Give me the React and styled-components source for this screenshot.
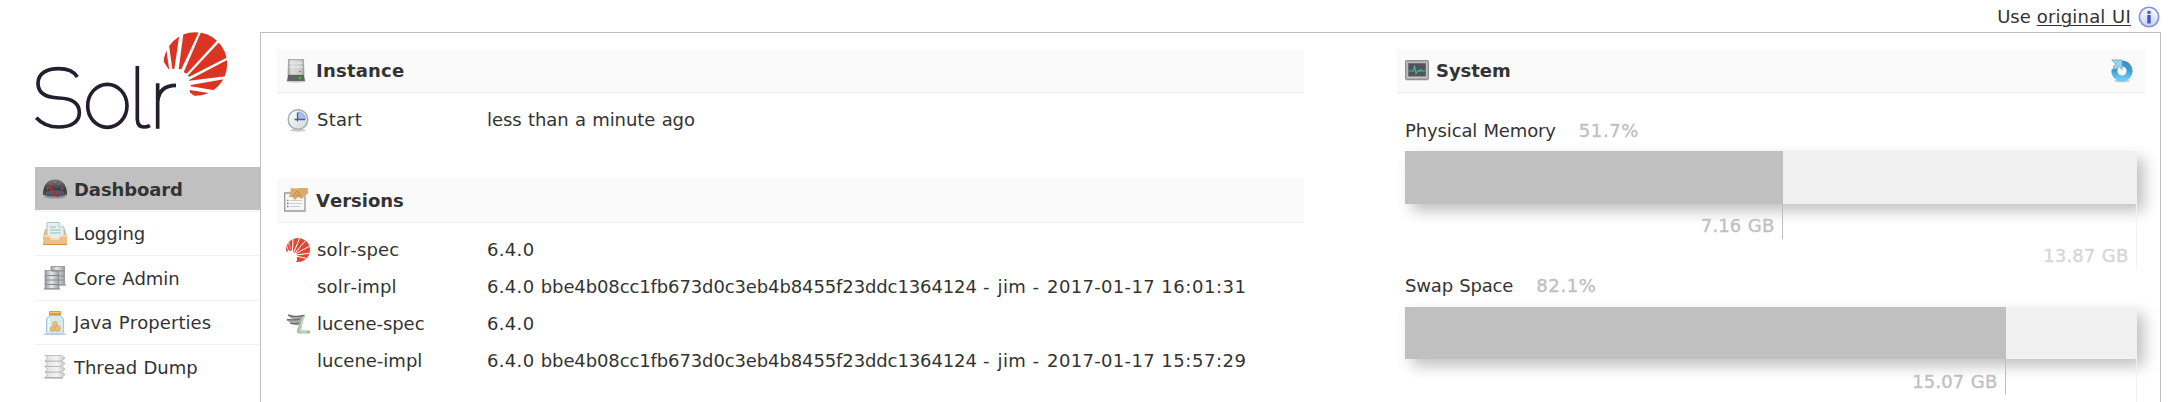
import React from "react";
import styled, { createGlobalStyle } from "styled-components";

const GlobalStyle = createGlobalStyle`
  * { box-sizing: border-box; }
  body {
    margin: 0;
    background: #fff;
    color: #333;
    font-family: Verdana, "DejaVu Sans", sans-serif;
    font-size: 18px;
    font-kerning: none;
    word-spacing: 0.034em;
    overflow: hidden;
  }
  svg { display: block; flex: none; }
`;

const Page = styled.div`
  display: flex;
  flex-direction: column;
  width: 2168px;
  height: 402px;
  overflow: hidden;
`;

const TopBar = styled.div`
  display: flex;
  align-items: center;
  justify-content: flex-end;
  height: 32px;
  padding: 1px 8px 0 0;
  flex: none;
`;

const OriginalLink = styled.a`
  color: #333;
  text-decoration: underline;
  text-decoration-thickness: 1px;
  text-underline-offset: 2px;
  margin: 0 7px 0 6px;
`;

const Main = styled.div`
  display: flex;
  flex: 1;
  min-height: 0;
  padding: 0 7px 0 35px;
`;

const Sidebar = styled.aside`
  width: 225px;
  flex: none;
`;

const LogoArea = styled.div`
  height: 135px;
`;

const Menu = styled.ul`
  list-style: none;
  margin: 0;
  padding: 0;
`;

const MenuItem = styled.li`
  display: flex;
  align-items: center;
  gap: 7px;
  height: 44.4px;
  padding: 0.6px 0 0 8px;
  border-top: 1px solid ${(p) => (p.$first ? "transparent" : "#f0f0f0")};
  background: ${(p) => (p.$active ? "#c0c0c0" : "transparent")};
  font-weight: ${(p) => (p.$active ? "bold" : "normal")};
`;

const ActiveItem = styled(MenuItem)`
  height: 43px;
  margin-bottom: 1px;
  padding-top: 2px;
  border-top: 0;
`;

const Label = styled.span`
  white-space: nowrap;
  letter-spacing: ${(p) => p.$track || 0}px;
`;

const Panel = styled.main`
  display: flex;
  justify-content: space-between;
  flex: 1;
  height: 400px;
  border: 1px solid #c0c0c0;
  padding: 16px 15px 0 16px;
`;

const LeftColumn = styled.div`
  width: 1027px;
`;

const RightColumn = styled.div`
  width: 748px;
`;

const Block = styled.section`
  margin-bottom: 40px;
`;

const BlockTitle = styled.h2`
  display: flex;
  align-items: center;
  height: ${(p) => p.$height || 44}px;
  margin: 0;
  padding: 0 12px 0 ${(p) => p.$indent || 7}px;
  background: #fafafa;
  border-bottom: 1px solid #f0f0f0;
  font-size: 18px;
  font-weight: bold;
`;

const TitleText = styled(Label)`
  flex: 1;
  margin-left: ${(p) => p.$gap || 8}px;
`;

const Rows = styled.dl`
  margin: 0;
  padding-top: 8px;
`;

const Row = styled.div`
  display: grid;
  grid-template-columns: 40px 170px 1fr;
  align-items: center;
  height: 37px;
`;

const RowIcon = styled.span`
  padding-left: 9px;
`;

const Term = styled.dt`
  white-space: nowrap;
  letter-spacing: ${(p) => p.$track || 0}px;
`;

const Value = styled.dd`
  margin: 0;
  white-space: nowrap;
  letter-spacing: ${(p) => p.$track || 0}px;
`;

const Gauges = styled.div`
  padding: 26px 8px 0;
`;

const GaugeHead = styled.div`
  display: flex;
  gap: 23px;
  height: 24px;
  line-height: 24px;
  margin: ${(p) => p.$margin};
`;

const Percent = styled(Label)`
  color: #c0c0c0;
  letter-spacing: 0.6px;
  -webkit-text-stroke: 0.35px #c0c0c0;
`;

const Track = styled.div`
  height: ${(p) => p.$height}px;
  background: #f0f0f0;
  box-shadow: 7px 7px 14px #c0c0c0;
`;

const Fill = styled.div`
  width: ${(p) => p.$width}px;
  height: 100%;
  background: #c0c0c0;
`;

const Scale = styled.div`
  border-right: 1px solid #f0f0f0;
  text-align: right;
  line-height: 26px;
  letter-spacing: 0.12px;
  -webkit-text-stroke: 0.35px;
`;

const UsedMark = styled.div`
  width: ${(p) => p.$width}px;
  height: ${(p) => p.$height}px;
  padding: ${(p) => p.$height - 26}px 7.6px 0 0;
  border-right: 1px solid #c0c0c0;
  color: #c0c0c0;
`;

const TotalMark = styled.div`
  height: 30px;
  padding: 4px 7.6px 0 0;
  color: #d6d6d6;
`;

function Logo() {
  return (
    <svg width="195" height="100" viewBox="105 96 585 300">
      <g fill="none" stroke="#241f2c" strokeWidth="11">
        <path d="M232 231C221 213 200 206 176 206C139 206 114 221 114 250C114 282 140 293 176 294C215 295 238 309 238 338C238 367 211 381 176 381C147 381 124 370 109 353" />
        <ellipse cx="322" cy="317.500" rx="59" ry="64.500" />
        <path d="M412 198V358Q413 381 432 381Q442 381 450 377" />
        <path d="M473 386V250M473 305Q477 256 528 256" />
      </g>
      <clipPath id="disc"><circle cx="586" cy="192" r="95.500" /></clipPath>
      <g fill="#da3523" clipPath="url(#disc)">
        <path d="M480 182L499 149L508 211L490 184Z" />
        <path d="M506 128L541 85L523 207H517Z" />
        <path d="M553 80L604 80L544 208H536Z" />
        <path d="M610 80L664 108L560 221L551 217Z" />
        <path d="M670 113L700 163L568 230L563 227Z" />
        <path d="M704 168V226L567 242V240Z" />
        <path d="M700 233L670 275L572 259V255Z" />
        <path d="M569 270L640 281L596 300L570 277Z" />
      </g>
    </svg>
  );
}

const InfoIcon = () => (
  <svg width="22" height="22" viewBox="0 0 22 22">
    <defs><linearGradient id="info" x2="0" y2="1"><stop stopColor="#fff" /><stop offset="1" stopColor="#ccd2e8" /></linearGradient></defs>
    <circle cx="11" cy="11" r="9.700" fill="url(#info)" stroke="#7f92ea" strokeWidth="1.600" />
    <circle cx="11" cy="6.300" r="1.900" fill="#4868dc" />
    <path d="M11 9V17.500" stroke="#3656d0" strokeWidth="3.400" />
  </svg>
);

const GaugeIcon = () => (
  <svg width="24" height="24" viewBox="0 0 24 24">
    <defs><linearGradient id="dash" x2="0" y2="1"><stop stopColor="#777" /><stop offset=".6" stopColor="#3d3d40" /><stop offset="1" stopColor="#55565f" /></linearGradient></defs>
    <ellipse cx="12" cy="18.500" rx="11" ry="2" fill="#777" opacity=".6" />
    <path d="M0 14C1 5 6 1.500 12 1.500S23 5 24 14V17Q12 20 0 17Z" fill="url(#dash)" />
    <path d="M3 14C7 11.500 17 11.500 21 14V16.500H3Z" fill="#555869" />
    <path d="M4 11L5.500 10.500M7 5.500L8 6.500M12 3.500V5M17 5.500L16 6.500M20 11L18.500 10.500" stroke="#999" />
    <path d="M5 7L15 19" stroke="#d02424" strokeWidth="1.600" />
  </svg>
);

const InboxIcon = () => (
  <svg width="24" height="24" viewBox="0 0 24 24">
    <path d="M2 7H22L24 14V22Q24 23 23 23H1Q0 23 0 22V14Z" fill="#e8b983" />
    <path d="M4 .5H16L21 5V17H4Z" fill="#e5f1f0" stroke="#a9c4c5" />
    <path d="M16 .5V5H21" fill="#fff" stroke="#a9c4c5" />
    <path d="M7 5H13M7 8H18M7 11H18" stroke="#b3cbcb" strokeWidth="1.400" />
    <path d="M0 13.500H7L8.500 16.500H15.500L17 13.500H24V22Q24 23 23 23H1Q0 23 0 22Z" fill="#efbd86" />
    <path d="M0 14H7L8.500 17H15.500L17 14H24" fill="none" stroke="#fae0bd" strokeWidth="1.300" />
    <path d="M0 22.500H24" stroke="#cf8c45" />
  </svg>
);

const ServersIcon = () => (
  <svg width="24" height="24" viewBox="0 0 24 24">
    <defs><linearGradient id="rack"><stop stopColor="#989b9d" /><stop offset=".45" stopColor="#e6e7eb" /><stop offset="1" stopColor="#999da0" /></linearGradient></defs>
    <path d="M1 23H17M16 19H23" stroke="#bbb" strokeWidth="2" />
    <g fill="url(#rack)" stroke="#8d9095" strokeWidth=".8">
      <rect x="8" y="0.500" width="13.500" height="18" /><rect x="2" y="4.500" width="14" height="18" />
    </g>
    <path d="M8 5H21M16 10H21M16 14H21M2 9.500H16M2 14H16M2 18.500H16" stroke="#85898e" strokeWidth="1.100" />
    <path d="M18 13H20M12 17H15M12 21H15" stroke="#93c5a0" strokeWidth="1.200" />
  </svg>
);

const JarIcon = () => (
  <svg width="24" height="24" viewBox="0 0 24 24">
    <path d="M1 23.300H23" stroke="#ccc" strokeWidth="1.400" />
    <path d="M7 4H17L20.500 8V21Q20.500 23 18.500 23H5.500Q3.500 23 3.500 21V8Z" fill="#d5e8f5" stroke="#a3c7e0" />
    <path d="M6 7V20" stroke="#f3faff" strokeWidth="2" />
    <rect x="6" y="0" width="12" height="4.500" rx="1" fill="#d9a038" />
    <path d="M7 1.500H17" stroke="#f5ce77" />
    <g fill="#e7be72" stroke="#cda153" strokeWidth=".6"><circle cx="12" cy="13" r="2.500" /><circle cx="9.500" cy="18" r="2.600" /><circle cx="14.500" cy="17.500" r="2.900" /></g>
  </svg>
);

const ThreadIcon = () => (
  <svg width="24" height="24" viewBox="0 0 24 24">
    <defs><linearGradient id="stack"><stop stopColor="#dedede" /><stop offset=".6" stopColor="#f4f4f4" /><stop offset="1" stopColor="#c6c6c6" /></linearGradient></defs>
    {[17, 11.500, 6, 0.500].map((y) => (
      <path key={y} d={`M2 ${y}H18.500L22 ${y + 2.5}L19 ${y + 5.5}H2L4.500 ${y + 2.5}Z`} fill="url(#stack)" stroke="#b2b2b2" strokeWidth=".8" />
    ))}
    <path d="M1.500 23H20" stroke="#aaa" strokeWidth="1.200" />
  </svg>
);

const ServerIcon = () => (
  <svg width="24" height="24" viewBox="0 0 24 24">
    <defs><linearGradient id="tower"><stop stopColor="#999" /><stop offset=".2" stopColor="#ddd" /><stop offset=".8" stopColor="#ccc" /><stop offset="1" stopColor="#999" /></linearGradient></defs>
    <ellipse cx="12" cy="22.500" rx="10" ry="1.200" fill="#ccc" />
    <path d="M4.500 .5H19.500L20 16H4Z" fill="url(#tower)" stroke="#999" strokeWidth=".8" />
    <path d="M5 4H19M5 8H19" stroke="#eee" />
    <path d="M4 16H20L21 22H3Z" fill="#626262" />
    <circle cx="16" cy="12.500" r=".7" fill="#555" />
    <circle cx="16" cy="19" r="1.200" fill="#36ca36" />
  </svg>
);

const ClockIcon = () => (
  <svg width="24" height="24" viewBox="0 0 24 24">
    <defs><linearGradient id="clock" x2="1" y2="1"><stop stopColor="#fff" /><stop offset="1" stopColor="#ccdad9" /></linearGradient></defs>
    <ellipse cx="12" cy="22.300" rx="8" ry="1.500" fill="#ccc" />
    <circle cx="12" cy="11.500" r="9.800" fill="url(#clock)" stroke="#a3aead" strokeWidth="1.500" />
    <path d="M12 11.500V4A7.500 7.500 0 0 1 19.500 11.500Z" fill="#a9bdf3" stroke="#7d94da" strokeWidth=".7" />
    <path d="M11.500 4.500V13.500M8.500 11.500H19" stroke="#4d5e8d" strokeWidth="1.300" />
  </svg>
);

const ContractIcon = () => (
  <svg width="24" height="24" viewBox="0 0 24 24">
    <path d="M.7 5H21V23H.7Z" fill="#f6f6f6" stroke="#999" strokeWidth="1.300" />
    <path d="M6 12.500H18M6 15.500H18M6 18.500H16" stroke="#ccc" strokeWidth="1.200" />
    <path d="M3 12.500H4.500" stroke="#43bd43" strokeWidth="1.500" /><path d="M3 15.500H4.500" stroke="#df5353" strokeWidth="1.500" /><path d="M3 18.500H4.500" stroke="#5d79e1" strokeWidth="1.500" />
    <path d="M7 0L12 .5L15 0L24 0V6L21 7L18 11L14 9L11 12L8 9L5 9L6 5Z" fill="#dfaa6d" />
    <path d="M9 8L13 3L18 9M11 9L14 6M15 9L14 7" fill="none" stroke="#bd8447" strokeWidth=".9" />
  </svg>
);

const SunIcon = () => (
  <svg width="24" height="24" viewBox="0 0 24 24">
    <clipPath id="small-disc"><circle cx="12" cy="12" r="12" /></clipPath>
    <g clipPath="url(#small-disc)">
      <path d="M0 0H24V24H10V17L4 13L3 18L0 14Z" fill="#dd4935" />
      <path d="M0 6L3 15M2 2L5 14M7 0L6.500 14M14 -1L8 14M20 2L9 15M24 8L9 16M25 15L10 17M23 21L10 18" stroke="#fff" strokeWidth="1" />
      <path d="M0 24V13L5 12L11 17V23Z" fill="#fff" />
      <path d="M0 7L2 13L1 14ZM3 4L5 13L3.500 13Z" fill="#dd4935" />
    </g>
  </svg>
);

const LuceneIcon = () => (
  <svg width="24" height="24" viewBox="0 0 24 24">
    <path d="M2 2.500Q9 5 19.500 2.500L17 8L15 18.500H24V21.500H13Q10 21 11.500 17L13 13.500Q5 12.500 3.500 10.500L10 11Q1 10 0 7.500L9 8Q3 6 2 2.500Z" fill="#a9afa9" />
    <path d="M2 3Q9 6 18 3.500M1 7.500Q8 8.500 14 7M4 11Q10 12.500 13 11" stroke="#6a716b" fill="none" strokeWidth="1.400" />
    <path d="M18 4.500Q15.500 9 14.500 16Q13 20 16 20H21" stroke="#b4dab2" fill="none" strokeWidth="1.900" />
  </svg>
);

const MonitorIcon = () => (
  <svg width="24" height="24" viewBox="0 0 24 24">
    <rect x="1" y="19" width="22" height="3" fill="#ddd" />
    <rect x=".7" y="1.700" width="22.600" height="18.600" rx="1" fill="#c5c5c5" stroke="#929292" strokeWidth="1.400" />
    <rect x="3.200" y="4.200" width="17.600" height="13" fill="#4f535b" stroke="#777" strokeWidth=".6" />
    <path d="M4 12H8.500L9.500 6.500L11 14.500L13 11.500L15 12.500L16 10.500L17 12H20" fill="none" stroke="#47bd9b" strokeWidth="1.100" />
  </svg>
);

const ReloadIcon = () => (
  <svg width="22" height="24" viewBox="0 0 22 24">
    <defs><linearGradient id="reload" x2="0" y2="1"><stop stopColor="#3c90c0" /><stop offset=".5" stopColor="#3f9fd3" /><stop offset="1" stopColor="#68cbf5" /></linearGradient></defs>
    <ellipse cx="11" cy="22" rx="8" ry="1.300" fill="#ccc" />
    <circle cx="11" cy="12" r="7.600" fill="none" stroke="url(#reload)" strokeWidth="6" />
    <path d="M11 0H0V11L5 8L11 12Z" fill="#fafafa" />
    <path d="M.8 1H11V10.500L8 7.500L4.500 10.500L2 8L5 5Z" fill="#9ed3ed" stroke="#58abd5" strokeWidth=".9" />
  </svg>
);

const menu = [
  { name: "Logging", Icon: InboxIcon, track: -0.1 },
  { name: "Core Admin", Icon: ServersIcon, track: -0.04 },
  { name: "Java Properties", Icon: JarIcon, track: 0.08 },
  { name: "Thread Dump", Icon: ThreadIcon, track: -0.03 },
];

const build = (time) => ({
  version: "6.4.0",
  commit: "bbe4b08cc1fb673d0c3eb4b8455f23ddc1364124",
  author: "jim",
  date: "2017-01-17",
  time,
});

const versions = [
  { name: "solr-spec", Icon: SunIcon, track: 0.12, value: { version: "6.4.0" } },
  { name: "solr-impl", track: 0.17, value: build("16:01:31") },
  { name: "lucene-spec", Icon: LuceneIcon, track: -0.06, value: { version: "6.4.0" } },
  { name: "lucene-impl", track: 0, value: build("15:57:29") },
];

function BuildInfo({ version, commit, author, date, time }) {
  return (
    <Value>
      <Label $track={0.33}>{version}</Label>
      {commit && (
        <>
          {" "}<Label $track={-0.118}>{commit}</Label>
          {" "}<Label $track={1.67}>-</Label>
          {" "}<Label $track={0.37}>{author}</Label>
          {" "}<Label $track={1.67}>-</Label>
          {" "}<Label $track={0.33}>{date}</Label>
          {" "}<Label $track={0.53}>{time}</Label>
        </>
      )}
    </Value>
  );
}

export default function App() {
  return (
    <Page>
      <GlobalStyle />
      <TopBar>
        <Label $track={-0.05}>Use</Label>
        <OriginalLink><Label $track={0.2}>original UI</Label></OriginalLink>
        <InfoIcon />
      </TopBar>
      <Main>
        <Sidebar>
          <LogoArea><Logo /></LogoArea>
          <Menu>
            <ActiveItem $active><GaugeIcon /><Label $track={-0.1}>Dashboard</Label></ActiveItem>
            {menu.map(({ name, Icon, track }) => (
              <MenuItem key={name}><Icon /><Label $track={track}>{name}</Label></MenuItem>
            ))}
          </Menu>
        </Sidebar>
        <Panel>
          <LeftColumn>
            <Block>
              <BlockTitle><ServerIcon /><TitleText $track={0.22}>Instance</TitleText></BlockTitle>
              <Rows>
                <Row><RowIcon><ClockIcon /></RowIcon><Term $track={0.2}>Start</Term><Value $track={-0.05}>less than a minute ago</Value></Row>
              </Rows>
            </Block>
            <Block>
              <BlockTitle $height={45}><ContractIcon /><TitleText>Versions</TitleText></BlockTitle>
              <Rows>
                {versions.map(({ name, Icon, track, value }) => (
                  <Row key={name}><RowIcon>{Icon && <Icon />}</RowIcon><Term $track={track}>{name}</Term><BuildInfo {...value} /></Row>
                ))}
              </Rows>
            </Block>
          </LeftColumn>
          <RightColumn>
            <BlockTitle $indent={8}><MonitorIcon /><TitleText $gap={7} $track={-0.05}>System</TitleText><ReloadIcon /></BlockTitle>
            <Gauges>
              <GaugeHead $margin="0 0 8px"><Label $track={-0.13}>Physical Memory</Label><Percent>51.7%</Percent></GaugeHead>
              <Track $height={53}><Fill $width={378} /></Track>
              <Scale>
                <UsedMark $width={378} $height={35}>7.16 GB</UsedMark>
                <TotalMark>13.87 GB</TotalMark>
              </Scale>
              <GaugeHead $margin="5px 0 9px"><Label $track={-0.15}>Swap Space</Label><Percent>82.1%</Percent></GaugeHead>
              <Track $height={52}><Fill $width={601} /></Track>
              <Scale>
                <UsedMark $width={601} $height={36}>15.07 GB</UsedMark>
                <TotalMark />
              </Scale>
            </Gauges>
          </RightColumn>
        </Panel>
      </Main>
    </Page>
  );
}
